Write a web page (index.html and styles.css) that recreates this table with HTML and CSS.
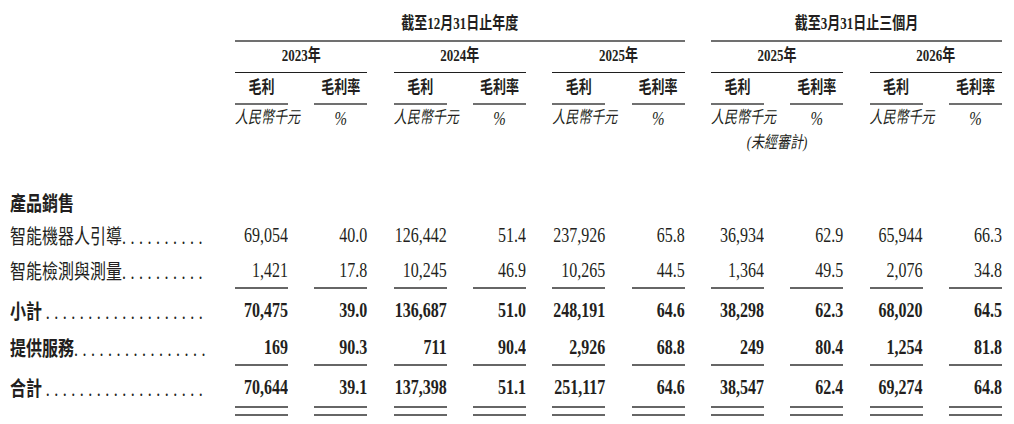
FILE: index.html
```html
<!DOCTYPE html>
<html lang="zh-Hant">
<head>
<meta charset="utf-8">
<title>毛利及毛利率</title>
<link rel="stylesheet" href="styles.css">
</head>
<body>
<div class="sheet">
  <div class="row r-title">
    <div></div>
    <div class="h span6"><span class="t">截至12月31日止年度</span></div>
    <div class="h span4"><span class="t">截至3月31日止三個月</span></div>
  </div>
  <div class="row r-year">
    <div></div>
    <div class="h span2"><span class="t">2023年</span></div>
    <div class="h span2"><span class="t">2024年</span></div>
    <div class="h span2"><span class="t">2025年</span></div>
    <div class="h span2"><span class="t">2025年</span></div>
    <div class="h span2"><span class="t">2026年</span></div>
  </div>
  <div class="row r-sub">
    <div></div>
    <div class="h"><span class="t">毛利</span></div><div class="h"><span class="t">毛利率</span></div>
    <div class="h"><span class="t">毛利</span></div><div class="h"><span class="t">毛利率</span></div>
    <div class="h"><span class="t">毛利</span></div><div class="h"><span class="t">毛利率</span></div>
    <div class="h"><span class="t">毛利</span></div><div class="h"><span class="t">毛利率</span></div>
    <div class="h"><span class="t">毛利</span></div><div class="h"><span class="t">毛利率</span></div>
  </div>
  <div class="row r-unit">
    <div></div>
    <div class="u"><span class="t">人民幣千元</span></div><div class="u pct"><span class="t">%</span></div>
    <div class="u"><span class="t">人民幣千元</span></div><div class="u pct"><span class="t">%</span></div>
    <div class="u"><span class="t">人民幣千元</span></div><div class="u pct"><span class="t">%</span></div>
    <div class="u"><span class="t">人民幣千元</span></div><div class="u pct"><span class="t">%</span></div>
    <div class="u"><span class="t">人民幣千元</span></div><div class="u pct"><span class="t">%</span></div>
  </div>
  <div class="row r-audit">
    <div class="u audit"><span class="t">(未經審計)</span></div>
  </div>

  <div class="row r-group">
    <div class="lbl bold"><span class="t">產品銷售</span></div>
  </div>
  <div class="row r-body">
    <div class="lbl"><span class="t">智能機器人引導<span class="dots">..........</span></span></div>
    <div class="n"><span class="t">69,054</span></div><div class="n"><span class="t">40.0</span></div>
    <div class="n"><span class="t">126,442</span></div><div class="n"><span class="t">51.4</span></div>
    <div class="n"><span class="t">237,926</span></div><div class="n"><span class="t">65.8</span></div>
    <div class="n"><span class="t">36,934</span></div><div class="n"><span class="t">62.9</span></div>
    <div class="n"><span class="t">65,944</span></div><div class="n"><span class="t">66.3</span></div>
  </div>
  <div class="row r-body r-line">
    <div class="lbl"><span class="t">智能檢測與測量<span class="dots">..........</span></span></div>
    <div class="n"><span class="t">1,421</span></div><div class="n"><span class="t">17.8</span></div>
    <div class="n"><span class="t">10,245</span></div><div class="n"><span class="t">46.9</span></div>
    <div class="n"><span class="t">10,265</span></div><div class="n"><span class="t">44.5</span></div>
    <div class="n"><span class="t">1,364</span></div><div class="n"><span class="t">49.5</span></div>
    <div class="n"><span class="t">2,076</span></div><div class="n"><span class="t">34.8</span></div>
  </div>
  <div class="row r-sum bold">
    <div class="lbl"><span class="t">小計 <span class="dots">...................</span></span></div>
    <div class="n"><span class="t">70,475</span></div><div class="n"><span class="t">39.0</span></div>
    <div class="n"><span class="t">136,687</span></div><div class="n"><span class="t">51.0</span></div>
    <div class="n"><span class="t">248,191</span></div><div class="n"><span class="t">64.6</span></div>
    <div class="n"><span class="t">38,298</span></div><div class="n"><span class="t">62.3</span></div>
    <div class="n"><span class="t">68,020</span></div><div class="n"><span class="t">64.5</span></div>
  </div>
  <div class="row r-svc r-line bold">
    <div class="lbl"><span class="t">提供服務<span class="dots">................</span></span></div>
    <div class="n"><span class="t">169</span></div><div class="n"><span class="t">90.3</span></div>
    <div class="n"><span class="t">711</span></div><div class="n"><span class="t">90.4</span></div>
    <div class="n"><span class="t">2,926</span></div><div class="n"><span class="t">68.8</span></div>
    <div class="n"><span class="t">249</span></div><div class="n"><span class="t">80.4</span></div>
    <div class="n"><span class="t">1,254</span></div><div class="n"><span class="t">81.8</span></div>
  </div>
  <div class="row r-total bold">
    <div class="lbl"><span class="t">合計 <span class="dots">...................</span></span></div>
    <div class="n"><span class="t">70,644</span></div><div class="n"><span class="t">39.1</span></div>
    <div class="n"><span class="t">137,398</span></div><div class="n"><span class="t">51.1</span></div>
    <div class="n"><span class="t">251,117</span></div><div class="n"><span class="t">64.6</span></div>
    <div class="n"><span class="t">38,547</span></div><div class="n"><span class="t">62.4</span></div>
    <div class="n"><span class="t">69,274</span></div><div class="n"><span class="t">64.8</span></div>
  </div>
</div>
</body>
</html>
```
FILE: styles.css
```css
html, body {
  margin: 0;
  padding: 0;
  background: #ffffff;
}

body {
  color: #231f20;
  font-family: "Liberation Serif", "Noto Sans CJK TC", serif;
  font-size: 16px;
  line-height: 20px;
}

.sheet {
  display: grid;
  grid-template-columns: 198.67px repeat(10, 53px);
  column-gap: 26.33px;
  padding-left: 10px;
  width: 1004px;
  box-sizing: border-box;
}

.row {
  display: contents;
}

.t {
  display: inline-block;
  transform: scaleY(1.3);
  transform-origin: center center;
  white-space: nowrap;
}

.bold {
  font-weight: 700;
}

/* header cells */
.h {
  text-align: center;
  font-size: 13px;
  font-weight: 700;
  font-family: "Liberation Serif", "Noto Sans CJK TC", serif;
}

.span6 { grid-column: span 6; }
.span4 { grid-column: span 4; }
.span2 { grid-column: span 2; }

.r-title > div {
  padding: 14px 0 6px;
}
.r-title > .h {
  border-bottom: 2px solid #707070;
}

.r-year > div {
  padding: 4px 0 6px;
}
.r-year > .h {
  border-bottom: 1px solid #1f1f1f;
}

.r-sub > div {
  padding: 5px 0 5px;
}
.r-sub > .h {
  border-bottom: 2px solid #707070;
}

.u {
  text-align: center;
  font-size: 13px;
  font-style: italic;
  font-family: "Liberation Serif", "Noto Sans CJK TC", serif;
}

.u.pct {
  font-size: 15px;
}

.r-unit > div {
  padding-top: 3px;
}

.audit {
  grid-column: 8 / span 2;
  padding-top: 5px;
}

/* body */
.lbl {
  grid-column: 1;
  text-align: left;
  font-family: "Noto Sans CJK TC", sans-serif;
}

.lbl .dots {
  font-family: "Liberation Serif", serif;
  font-weight: 400;
  letter-spacing: 4.5px;
}

.n {
  text-align: right;
}

.r-group > div {
  padding-top: 39px;
}

.r-body > div {
  padding-top: 13px;
}

.r-line > div {
  padding-bottom: 7px;
}
.r-line > .n {
  border-bottom: 2px solid #666666;
}

.r-sum > div {
  padding-top: 11px;
}

.r-svc > div {
  padding-top: 15px;
}

.r-total > div {
  padding-top: 11px;
  padding-bottom: 17px;
}
.r-total > .n {
  background:
    linear-gradient(#666666, #666666) left bottom / 100% 2px no-repeat,
    linear-gradient(#666666, #666666) left calc(100% - 8px) / 100% 2px no-repeat;
}
```
